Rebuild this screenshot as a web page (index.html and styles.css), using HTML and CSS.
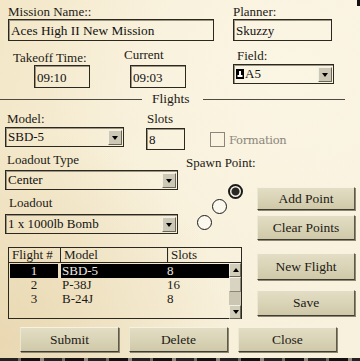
FILE: index.html
```html
<!DOCTYPE html>
<html lang="en">
<head>
    <meta charset="UTF-8">
    <title>Mission Planner</title>
    <link rel="stylesheet" href="styles.css">
</head>
<body>
    <div class="corner"></div>
    <div class="dialog">
        <div class="row row-top">
            <div class="group mission">
                <div class="lbl">Mission Name::</div>
                <div class="box">Aces High II New Mission</div>
            </div>
            <div class="group planner">
                <div class="lbl">Planner:</div>
                <div class="box">Skuzzy</div>
            </div>
        </div>

        <div class="row row-time">
            <div class="group takeoff">
                <div class="lbl">Takeoff Time:</div>
                <div class="box small">09:10</div>
            </div>
            <div class="group current">
                <div class="lbl">Current</div>
                <div class="box small">09:03</div>
            </div>
            <div class="group field">
                <div class="lbl">Field:</div>
                <div class="select">
                    <span class="sel-text"><svg class="field-icon" width="8" height="10" viewBox="0 0 8 10"><rect width="8" height="10" fill="#000"/><path d="M3 2h2v4h1.5v2h-5v-2h1.5z" fill="#fff"/></svg>A5</span>
                    <span class="drop"></span>
                </div>
            </div>
        </div>

        <div class="divider">
            <span class="line left"></span>
            <span class="title">Flights</span>
            <span class="line right"></span>
        </div>

        <div class="row row-model">
            <div class="group model">
                <div class="lbl">Model:</div>
                <div class="select">
                    <span class="sel-text">SBD-5</span>
                    <span class="drop"></span>
                </div>
            </div>
            <div class="group slots">
                <div class="lbl">Slots</div>
                <div class="box slot-box">8</div>
            </div>
            <div class="formation">
                <span class="check"></span>
                <span class="check-lbl">Formation</span>
            </div>
        </div>

        <div class="row row-loadout">
            <div class="loadout-col">
                <div class="lbl lbl-type">Loadout Type</div>
                <div class="select">
                    <span class="sel-text">Center</span>
                    <span class="drop"></span>
                </div>
                <div class="lbl lbl-load">Loadout</div>
                <div class="select">
                    <span class="sel-text">1 x 1000lb Bomb</span>
                    <span class="drop"></span>
                </div>
            </div>
            <div class="spawn">
                <div class="lbl">Spawn Point:</div>
                <span class="radio on p1"></span>
                <span class="radio p2"></span>
                <span class="radio p3"></span>
            </div>
            <div class="btn-col">
                <button class="btn add">Add Point</button>
                <button class="btn clear">Clear Points</button>
            </div>
        </div>

        <div class="row row-table">
            <div class="table">
                <div class="thead">
                    <span class="th c1">Flight #</span>
                    <span class="th c2">Model</span>
                    <span class="th c3">Slots</span>
                </div>
                <div class="tbody">
                    <div class="rows">
                        <div class="tr selected"><span class="c1">1</span><span class="c2">SBD-5</span><span class="c3">8</span></div>
                        <div class="tr"><span class="c1">2</span><span class="c2">P-38J</span><span class="c3">16</span></div>
                        <div class="tr"><span class="c1">3</span><span class="c2">B-24J</span><span class="c3">8</span></div>
                    </div>
                    <div class="scroll">
                        <span class="arrow up"></span>
                        <span class="thumb"></span>
                        <span class="track"></span>
                        <span class="arrow down"></span>
                    </div>
                </div>
            </div>
            <div class="btn-col">
                <button class="btn new">New Flight</button>
                <button class="btn save">Save</button>
            </div>
        </div>

        <div class="row row-bottom">
            <button class="btn wide">Submit</button>
            <button class="btn wide">Delete</button>
            <button class="btn wide">Close</button>
        </div>
    </div>
    <div class="edge"></div>
</body>
</html>
```

FILE: styles.css
```css
html, body {
    margin: 0;
    padding: 0;
}
body {
    width: 360px;
    height: 361px;
    overflow: hidden;
    position: relative;
    font-family: "Liberation Serif", "Times New Roman", serif;
    font-size: 13px;
    color: #1c1a15;
    background:
        radial-gradient(ellipse at 0% 95%, #e9d8b2 0%, rgba(233,216,178,0) 45%),
        radial-gradient(ellipse at 80% 20%, #fbf5e4 0%, rgba(251,245,228,0) 60%),
        linear-gradient(100deg, #f3e7c8 0%, #f7efd8 40%, #f8f1de 100%);
}
.corner {
    position: absolute;
    top: 0;
    right: 0;
    width: 3px;
    height: 6px;
    background: #111;
}
.edge {
    position: absolute;
    left: 0;
    bottom: 0;
    width: 360px;
    height: 3px;
    background: repeating-linear-gradient(90deg, #222 0 18px, #6e6a60 18px 21px, #111 21px 40px, #8b877b 40px 44px);
}
.dialog {
    padding-top: 5px;
}
.row {
    display: flex;
}
.lbl {
    line-height: 14px;
    height: 14px;
    white-space: nowrap;
}
.box {
    box-sizing: border-box;
    height: 22px;
    border: 1px solid #2b2820;
    box-shadow: inset 1px 1px 0 #9a9480;
    padding: 3px 0 0 2px;
    line-height: 15px;
    white-space: nowrap;
    color: #111;
}

/* mission / planner */
.row-top {
    padding-left: 8px;
}
.mission {
    width: 225px;
}
.mission .box {
    width: 206px;
    font-size: 13.3px;
}
.planner .box {
    width: 99px;
}

/* time row */
.row-time {
    margin-top: 7px;
    padding-left: 13px;
}
.takeoff {
    width: 111px;
}
.takeoff .lbl {
    margin-top: 3px;
}
.takeoff .box {
    margin-left: 21px;
}
.current {
    width: 109px;
}
.current .box {
    margin-left: 6px;
}
.box.small {
    width: 56px;
    height: 23px;
    padding-top: 4px;
}
.current .box.small {
    margin-top: 3px;
}
.field .lbl {
    margin-left: 4px;
    margin-top: 1px;
}
.field .select {
    width: 101px;
    margin-top: 1px;
}

/* select */
.select {
    box-sizing: border-box;
    height: 20px;
    border: 1px solid #2b2820;
    box-shadow: inset 1px 1px 0 #9a9480;
    display: flex;
    align-items: center;
    justify-content: space-between;
    padding: 0 1px 0 2px;
    color: #111;
}
.sel-text {
    display: flex;
    align-items: center;
    white-space: nowrap;
}
.field-icon {
    margin-right: 1px;
}
.drop {
    width: 14px;
    height: 15px;
    box-sizing: border-box;
    background: #cdc8b6;
    border-top: 1px solid #f2efe4;
    border-left: 1px solid #f2efe4;
    border-right: 1px solid #6b6757;
    border-bottom: 1px solid #6b6757;
    position: relative;
}
.drop::after {
    content: "";
    position: absolute;
    left: 3px;
    top: 5px;
    border-left: 3.5px solid transparent;
    border-right: 3.5px solid transparent;
    border-top: 4px solid #000;
}

/* divider */
.divider {
    display: flex;
    align-items: center;
    height: 14px;
    margin-top: 4px;
}
.divider .line {
    height: 1px;
    background: #4d4a42;
}
.divider .left {
    width: 142px;
}
.divider .right {
    width: 142px;
}
.divider .title {
    width: 61px;
    padding-left: 10px;
    box-sizing: border-box;
    font-size: 13.5px;
}

/* model row */
.row-model {
    margin-top: 6px;
    padding-left: 5px;
}
.model {
    width: 141px;
}
.model .lbl {
    margin-left: 2px;
}
.model .select {
    width: 119px;
    margin-top: 1px;
}
.slots {
    width: 64px;
}
.slots .lbl {
    margin-left: 1px;
}
.slot-box {
    width: 39px;
    margin-top: 2px;
    height: 22px;
}
.formation {
    display: flex;
    align-items: center;
    margin-top: 20px;
    height: 15px;
    color: #8a867c;
}
.check {
    width: 15px;
    height: 15px;
    box-sizing: border-box;
    border: 1px solid #8a867c;
    margin-right: 4px;
}
.check-lbl {
    font-family: "DejaVu Serif", serif;
    font-size: 11.5px;
    letter-spacing: -0.3px;
}

/* loadout row */
.row-loadout {
    margin-top: 1px;
    padding-left: 5px;
    height: 89px;
}
.loadout-col {
    width: 181px;
}
.loadout-col .select {
    width: 173px;
}
.lbl-type {
    margin: 2px 0 3px 2px;
}
.lbl-load {
    margin: 6px 0 4px 4px;
}
.spawn {
    position: relative;
    width: 71px;
}
.spawn .lbl {
    margin-top: 5px;
}
.radio {
    position: absolute;
    width: 15px;
    height: 15px;
    box-sizing: border-box;
    border: 1px solid #1a1a1a;
    border-radius: 50%;
    background: #fbf8ee;
}
.radio.on {
    border: 2px solid #1a1a1a;
    background: radial-gradient(circle, #2a2824 0 3.5px, #f4f0e4 4.5px);
}
.radio.p1 { left: 42px; top: 33px; }
.radio.p2 { left: 26px; top: 48px; }
.radio.p3 { left: 11px; top: 64px; }

.btn-col {
    display: flex;
    flex-direction: column;
    width: 98px;
}
.btn {
    box-sizing: border-box;
    width: 98px;
    font-family: "Liberation Serif", "Times New Roman", serif;
    font-size: 13.5px;
    color: #1c1a15;
    background: linear-gradient(180deg, #e2ddc4 0%, #d9d3b6 55%, #cfc8a8 100%);
    border: 1px solid;
    border-color: #f6f2e2 #5e5a4a #3f3c31 #ece7d2;
    box-shadow: 1px 1px 0 #8c8772;
    padding: 0;
}
.row-loadout .btn-col {
    padding-top: 36px;
}
.btn.add {
    height: 23px;
}
.btn.clear {
    height: 25px;
    margin-top: 5px;
}

/* table */
.row-table {
    margin-top: 7px;
    padding-left: 8px;
}
.table {
    box-sizing: border-box;
    width: 234px;
    height: 72px;
    border: 1px solid #2b2820;
    margin-right: 15px;
}
.thead {
    display: flex;
    height: 14px;
    border-bottom: 1px solid #2b2820;
}
.th {
    box-sizing: border-box;
    line-height: 13px;
    padding-left: 2px;
    border-right: 1px solid #2b2820;
    border-left: 1px solid #e8e2cc;
    white-space: nowrap;
}
.th.c1 { width: 52px; }
.th.c2 { width: 107px; }
.th.c3 { flex: 1; border-right: none; }
.tbody {
    display: flex;
    height: 56px;
}
.rows {
    flex: 1;
    padding-top: 1px;
}
.tr {
    display: flex;
    height: 14px;
    line-height: 14px;
}
.tr span {
    box-sizing: border-box;
    white-space: nowrap;
}
.tr .c1 { width: 48px; margin-left: 1px; text-align: center; }
.tr .c2 { width: 106px; margin-left: 3px; padding-left: 1px; }
.tr .c3 { width: 63px; margin-left: -1px; padding-left: 1px; }
.tr.selected span {
    background: #000;
    color: #eeeae0;
}
.scroll {
    width: 14px;
    display: flex;
    flex-direction: column;
    background: #d6d1bf;
}
.arrow {
    box-sizing: border-box;
    height: 14px;
    background: #d2cdb9;
    border: 1px solid;
    border-color: #f2efe4 #6b6757 #6b6757 #f2efe4;
    position: relative;
}
.arrow::after {
    content: "";
    position: absolute;
    left: 3px;
    top: 4px;
    border-left: 3.5px solid transparent;
    border-right: 3.5px solid transparent;
}
.arrow.up::after {
    border-bottom: 4px solid #000;
}
.arrow.down::after {
    border-top: 4px solid #000;
}
.thumb {
    height: 15px;
    box-sizing: border-box;
    background: #d9d4c2;
    border: 1px solid;
    border-color: #f2efe4 #8b8777 #8b8777 #f2efe4;
}
.track {
    flex: 1;
    background: #cbc6b2;
}
.row-table .btn-col {
    padding-top: 6px;
}
.btn.new {
    height: 27px;
}
.btn.save {
    height: 26px;
    margin-top: 10px;
}

/* bottom buttons */
.row-bottom {
    margin-top: 8px;
    padding-left: 20px;
    gap: 10px;
}
.btn.wide {
    width: 99px;
    height: 25px;
}
```
